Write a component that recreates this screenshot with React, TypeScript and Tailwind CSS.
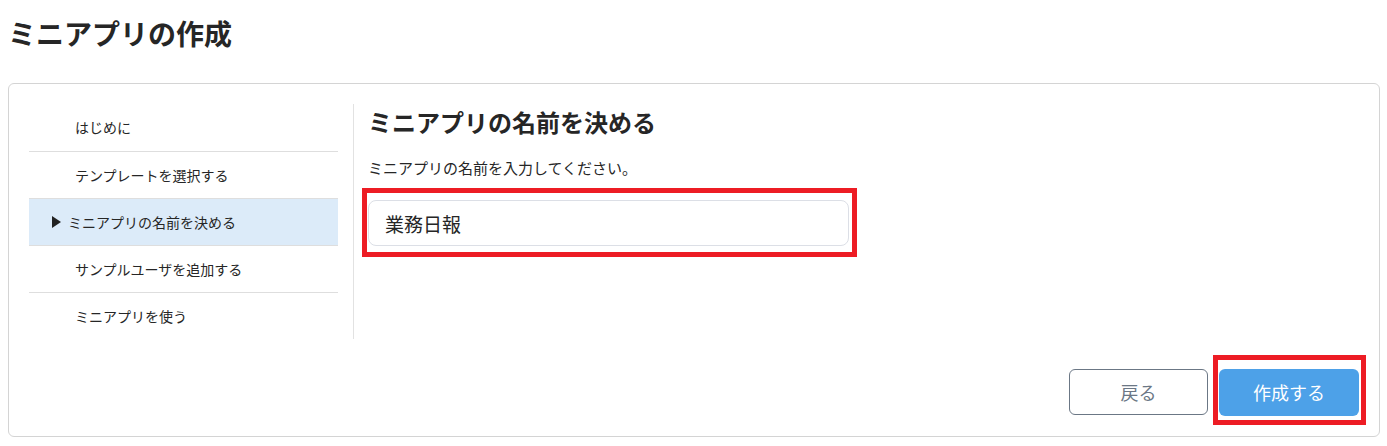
const steps = [
  'はじめに',
  'テンプレートを選択する',
  'ミニアプリの名前を決める',
  'サンプルユーザを追加する',
  'ミニアプリを使う',
]

const current = 2

export default function App() {
  return (
    <div
      className="min-h-screen bg-white pl-2 pr-[7px] pt-[13px] text-[#262626]"
      style={{ fontFamily: '"Noto Sans CJK JP", "Noto Sans", sans-serif' }}
    >
      <h1 className="text-[28px] font-bold leading-[40px]">ミニアプリの作成</h1>

      <div className="mt-[30px] rounded-md border border-[#d4d4d4] p-5">
        <div className="flex">
          {/* step list */}
          <div className="w-[325px] shrink-0 border-r border-[#e2e2e2] pr-[15px]">
            <ul>
              {steps.map((step, i) => (
                <li
                  key={step}
                  className={`flex h-[47px] items-center text-[14px] ${
                    i > 0 ? 'border-t border-[#dedede]' : ''
                  } ${i === current ? 'bg-[#dcebf9] pl-[23px]' : 'pl-[46px]'}`}
                >
                  {i === current && (
                    <svg width="9" height="12" viewBox="0 0 9 12" className="mr-[7px]">
                      <polygon points="0,0 9,6 0,12" fill="#222" />
                    </svg>
                  )}
                  <span>{step}</span>
                </li>
              ))}
            </ul>
          </div>

          {/* content */}
          <div className="flex-1 pl-[14px]">
            <h2 className="text-[24px] font-bold leading-[36px]">ミニアプリの名前を決める</h2>
            <p className="mt-4 text-[15px] leading-[24px]">ミニアプリの名前を入力してください。</p>
            <div className="relative mt-5 w-[481px]">
              <input
                type="text"
                defaultValue="業務日報"
                className="h-[46px] w-full rounded-lg border border-[#dcdfe6] pl-4 text-[19px] text-[#262626] outline-none"
              />
              <div className="pointer-events-none absolute -top-3 -bottom-[11px] -left-1.5 -right-2 border-[5px] border-[#ed1c24]" />
            </div>
          </div>
        </div>

        {/* actions */}
        <div className="mt-[30px] flex justify-end gap-[11px]">
          <button className="h-[46px] w-[139px] rounded-md border border-[#6b7785] bg-white text-[18px] text-[#6b7785]">
            戻る
          </button>
          <div className="relative">
            <button className="h-[47px] w-[140px] rounded-md bg-[#4da1e8] text-[18px] text-white">
              作成する
            </button>
            <div className="pointer-events-none absolute -top-3.5 -bottom-[9px] -left-1.5 -right-[7px] border-[5px] border-[#ed1c24]" />
          </div>
        </div>
      </div>
    </div>
  )
}
